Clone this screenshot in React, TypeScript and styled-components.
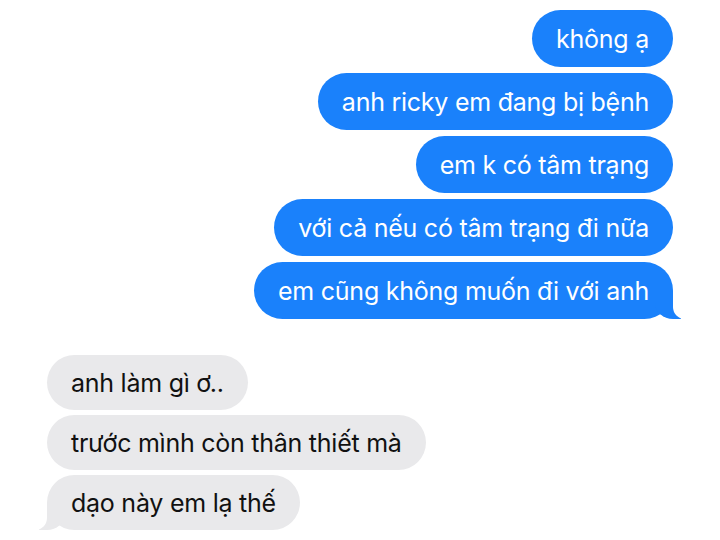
import React from "react";
import styled, { createGlobalStyle, css } from "styled-components";

const Global = createGlobalStyle`
  html, body { margin: 0; padding: 0; background: #ffffff; }
  body { font-family: Inter, "Noto Sans", "Liberation Sans", sans-serif; }
`;

const Page = styled.div`
  width: 720px;
  height: 540px;
  box-sizing: border-box;
  padding: 10px 47px 0 47px;
  display: flex;
  flex-direction: column;
  gap: 36px;
  overflow: hidden;
`;

const Group = styled.div<{ $side: "me" | "them" }>`
  display: flex;
  flex-direction: column;
  gap: ${(p) => (p.$side === "me" ? "6px" : "5px")};
  align-items: ${(p) => (p.$side === "me" ? "flex-end" : "flex-start")};
`;

const Bubble = styled.div<{ $side: "me" | "them"; $tail?: boolean }>`
  position: relative;
  height: ${(p) => (p.$side === "me" ? "57px" : "55px")};
  box-sizing: border-box;
  padding: 0 24px;
  border-radius: 29px;
  display: flex;
  align-items: center;
  font-size: 25px;
  letter-spacing: -0.25px;
  white-space: nowrap;
  ${(p) =>
    p.$side === "me"
      ? css`
          background: #1a81fb;
          color: #ffffff;
        `
      : css`
          background: #e9e9eb;
          color: #111111;
        `}
  ${(p) =>
    p.$tail &&
    p.$side === "me" &&
    css`
      &::before {
        content: "";
        position: absolute;
        right: -8px;
        bottom: 0;
        width: 26px;
        height: 28px;
        background: #1a81fb;
        border-bottom-left-radius: 18px 16px;
      }
      &::after {
        content: "";
        position: absolute;
        right: -26px;
        bottom: 0;
        width: 26px;
        height: 28px;
        background: #ffffff;
        border-bottom-left-radius: 12px;
      }
    `}
  ${(p) =>
    p.$tail &&
    p.$side === "them" &&
    css`
      &::before {
        content: "";
        position: absolute;
        left: -8px;
        bottom: 0;
        width: 26px;
        height: 28px;
        background: #e9e9eb;
        border-bottom-right-radius: 18px 16px;
      }
      &::after {
        content: "";
        position: absolute;
        left: -26px;
        bottom: 0;
        width: 26px;
        height: 28px;
        background: #ffffff;
        border-bottom-right-radius: 12px;
      }
    `}
`;

const Text = styled.span`
  position: relative;
  z-index: 1;
`;

const sent = [
  "không ạ",
  "anh ricky em đang bị bệnh",
  "em k có tâm trạng",
  "với cả nếu có tâm trạng đi nữa",
  "em cũng không muốn đi với anh",
];

const received = ["anh làm gì ơ..", "trước mình còn thân thiết mà", "dạo này em lạ thế"];

export default function App() {
  return (
    <Page>
      <Global />
      <Group $side="me">
        {sent.map((t, i) => (
          <Bubble key={t} $side="me" $tail={i === sent.length - 1}>
            <Text>{t}</Text>
          </Bubble>
        ))}
      </Group>
      <Group $side="them">
        {received.map((t, i) => (
          <Bubble key={t} $side="them" $tail={i === received.length - 1}>
            <Text>{t}</Text>
          </Bubble>
        ))}
      </Group>
    </Page>
  );
}
